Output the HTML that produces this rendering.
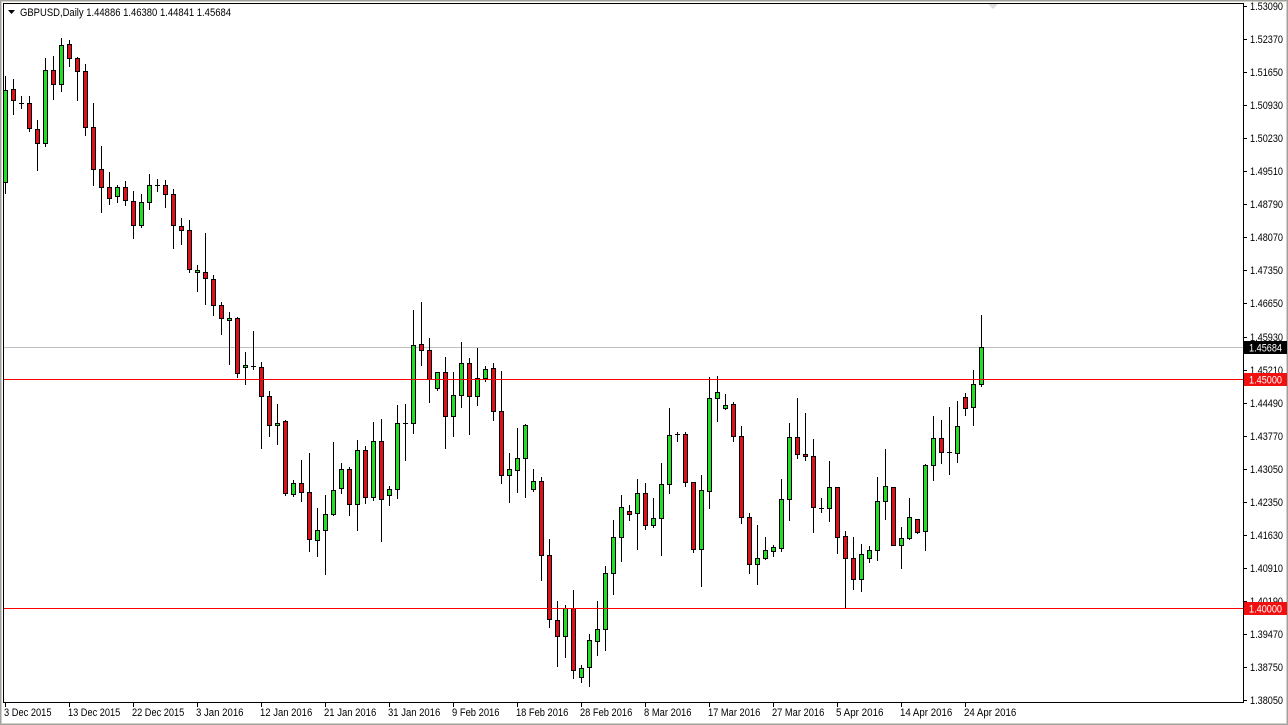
<!DOCTYPE html>
<html><head><meta charset="utf-8"><style>
html,body{margin:0;padding:0;background:#fff;}
body{width:1288px;height:725px;overflow:hidden;position:relative;font-family:"Liberation Sans",Tahoma,sans-serif;}
svg{position:absolute;left:0;top:0;}
text{font-family:"Liberation Sans",sans-serif;font-size:11px;fill:#000;}
</style></head><body>
<svg id="s" width="1288" height="725" xmlns="http://www.w3.org/2000/svg">
<rect x="0" y="0" width="1288" height="725" fill="#fff"/>
<rect x="0.5" y="0.5" width="1287" height="724" fill="none" stroke="#a0a0a0"/>
<rect x="1.5" y="1.5" width="1285" height="722" fill="none" stroke="#d4d0c8"/>
<line x1="3" y1="3.5" x2="1243" y2="3.5" stroke="#000"/>
<line x1="3.5" y1="3" x2="3.5" y2="703" stroke="#000"/>
<line x1="1243.5" y1="3" x2="1243.5" y2="703" stroke="#000"/>
<line x1="3" y1="702.5" x2="1244" y2="702.5" stroke="#000"/>
<path d="M988 4 L998 4 L993 9 Z" fill="#ddd"/>
<line x1="4" y1="347.5" x2="1243" y2="347.5" stroke="#c0c0c0"/>
<g id="c"></g>
<rect x="4" y="379" width="1239" height="1" fill="#ff0000"/>
<rect x="4" y="608" width="1239" height="1" fill="#ff0000"/>
<path d="M8 10 L15 10 L11.5 14 Z" fill="#000"/>
<text x="20" y="16" textLength="211" lengthAdjust="spacingAndGlyphs">GBPUSD,Daily  1.44886 1.46380 1.44841 1.45684</text>
<g id="ax"></g>
<rect x="1244" y="341" width="43" height="13" fill="#000"/>
<text x="1249" y="351.5" style="fill:#fff" textLength="33" lengthAdjust="spacingAndGlyphs">1.45684</text>
<rect x="1244" y="373" width="43" height="13" fill="#f01010"/>
<text x="1249" y="383.5" style="fill:#fff" textLength="33" lengthAdjust="spacingAndGlyphs">1.45000</text>
<rect x="1244" y="602" width="43" height="13" fill="#f01010"/>
<text x="1249" y="612.5" style="fill:#fff" textLength="33" lengthAdjust="spacingAndGlyphs">1.40000</text>
</svg>
<script>
var D=[
[90,182,76,193,'g'],[89,100,79,114,'r'],[103,103,96,108,'d'],[103,128,96,131,'r'],[129,143,120,170,'r'],
[70,143,58,146,'g'],[70,84,56,99,'r'],[45,84,38,91,'g'],[44,58,40,66,'r'],[58,71,57,100,'r'],
[71,127,64,135,'r'],[127,169,103,185,'r'],[169,187,146,212,'r'],[187,198,172,204,'r'],[187,196,185,202,'g'],
[187,200,181,205,'r'],[201,225,191,238,'r'],[202,225,194,227,'g'],[185,202,174,209,'g'],[185,185,179,191,'d'],
[185,194,180,207,'r'],[194,225,189,248,'r'],[226,230,218,244,'r'],[230,269,220,272,'r'],[270,272,265,291,'g'],
[272,278,233,304,'r'],[279,305,275,315,'r'],[305,318,302,334,'r'],[318,320,312,364,'g'],[318,373,317,377,'r'],
[365,367,352,384,'g'],[366,366,331,369,'d'],[367,396,362,448,'r'],[396,425,391,436,'r'],[423,425,404,444,'g'],
[421,493,420,495,'r'],[483,494,480,496,'g'],[483,492,460,501,'r'],[492,539,453,551,'r'],[530,540,508,556,'g'],
[514,530,495,574,'g'],[490,514,442,515,'g'],[469,488,463,493,'g'],[469,504,467,515,'r'],[450,504,440,530,'g'],
[450,497,446,503,'r'],[441,497,422,500,'g'],[441,499,419,541,'r'],[489,495,486,505,'g'],[423,489,405,498,'g'],
[423,423,404,460,'d'],[345,423,310,433,'g'],[344,350,302,365,'r'],[350,379,338,402,'r'],[372,388,372,390,'g'],
[372,416,357,448,'r'],[395,416,372,436,'g'],[363,395,342,407,'g'],[363,396,358,434,'r'],[378,396,348,405,'g'],
[369,378,366,381,'g'],[368,411,363,420,'r'],[411,475,371,483,'r'],[469,475,453,502,'g'],[458,470,428,492,'g'],
[425,458,424,497,'g'],[481,489,469,491,'g'],[481,555,477,580,'r'],[555,619,539,627,'r'],[620,636,601,666,'r'],
[608,636,605,657,'g'],[608,670,590,678,'r'],[668,677,665,682,'g'],[640,667,634,686,'g'],[629,641,601,655,'g'],
[573,629,566,650,'g'],[537,573,520,594,'g'],[507,537,495,561,'g'],[511,514,505,520,'r'],[493,513,479,549,'g'],
[493,525,483,529,'r'],[518,525,498,527,'g'],[484,518,463,555,'g'],[435,484,408,493,'g'],[434,434,432,441,'d'],
[434,482,432,486,'r'],[482,549,482,552,'r'],[490,549,475,586,'g'],[398,491,377,508,'g'],[392,398,376,421,'g'],
[405,408,394,409,'g'],[404,436,402,441,'r'],[436,517,426,523,'r'],[517,564,513,573,'r'],[558,564,525,584,'g'],
[550,558,537,559,'g'],[547,551,545,556,'g'],[499,548,479,551,'g'],[437,499,423,520,'g'],[437,454,398,458,'r'],
[454,456,413,460,'r'],[456,507,439,532,'r'],[508,508,498,512,'d'],[487,508,461,521,'g'],[487,537,487,553,'r'],
[536,558,531,607,'r'],[558,579,537,589,'r'],[554,579,544,591,'g'],[550,558,546,562,'g'],[501,550,477,560,'g'],
[486,501,449,519,'g'],[487,545,487,545,'r'],[538,545,527,568,'g'],[517,538,498,539,'g'],[519,532,519,533,'r'],
[465,531,464,550,'g'],[438,465,416,480,'g'],[438,452,420,463,'r'],[452,452,407,474,'d'],[426,453,401,462,'g'],
[397,408,393,415,'r'],[384,407,370,425,'g'],[347,384,315,386,'g']
];
var g=document.getElementById('c'),h='';
D.forEach(function(d,i){var x=5+8*i;
h+='<line x1="'+(x+.5)+'" y1="'+d[2]+'" x2="'+(x+.5)+'" y2="'+(d[3]+1)+'" stroke="#000"/>';
if(d[4]=='d'||d[1]-d[0]<1){h+='<line x1="'+(x-2)+'" y1="'+(d[0]+.5)+'" x2="'+(x+3)+'" y2="'+(d[0]+.5)+'" stroke="#000"/>';}
else{h+='<rect x="'+(x-1.5)+'" y="'+(d[0]+.5)+'" width="4" height="'+(d[1]-d[0])+'" fill="'+(d[4]=='g'?'#22dd22':'#e0101a')+'" stroke="#000"/>';}
});
g.innerHTML=h;
var P=["1.53090","1.52370","1.51650","1.50930","1.50230","1.49510","1.48790","1.48070","1.47350","1.46650","1.45930","1.45210","1.44490","1.43770","1.43050","1.42350","1.41630","1.40910","1.40190","1.39470","1.38750","1.38050"];
var a='';
P.forEach(function(p,i){var y=Math.round(6+i*33.05);a+='<line x1="1243" y1="'+(y+.5)+'" x2="1247" y2="'+(y+.5)+'" stroke="#000"/><text x="1250" y="'+(y+4)+'" textLength="33" lengthAdjust="spacingAndGlyphs">'+p+'</text>';});
var L=["3 Dec 2015","13 Dec 2015","22 Dec 2015","3 Jan 2016","12 Jan 2016","21 Jan 2016","31 Jan 2016","9 Feb 2016","18 Feb 2016","28 Feb 2016","8 Mar 2016","17 Mar 2016","27 Mar 2016","5 Apr 2016","14 Apr 2016","24 Apr 2016"];
L.forEach(function(t,i){var x=5+64*i;a+='<line x1="'+(x+.5)+'" y1="702" x2="'+(x+.5)+'" y2="707" stroke="#000"/><text x="'+(x-1)+'" y="716" textLength="'+(t.length*4.75)+'" lengthAdjust="spacingAndGlyphs">'+t+'</text>';});
document.getElementById('ax').innerHTML=a;
</script>
</body></html>
